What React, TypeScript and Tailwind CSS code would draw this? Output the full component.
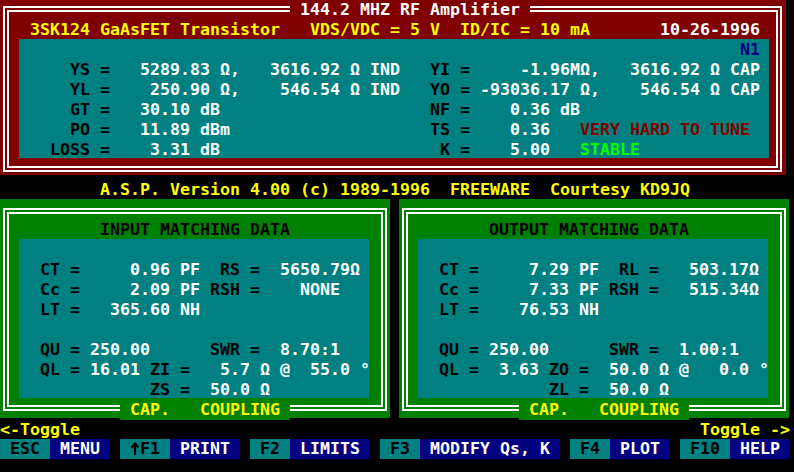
import React from 'react';

// [column, text, colour class]
type Seg = [number, string, string];

const W = 'text-white';
const K = 'text-black';
const Y = 'text-[#ffff00]';

// one 20px text row; `from` is the screen column at the row's left edge
const Line: React.FC<{ from: number; segs?: Seg[] }> = ({ from, segs = [] }) => {
  let pos = from;
  return (
    <div className="h-5 leading-5 whitespace-pre">
      {segs.map(([col, text, color], i) => {
        const pad = ' '.repeat(Math.max(0, col - pos));
        pos = col + [...text].length;
        return (
          <span key={i} className={color}>
            {pad + text}
          </span>
        );
      })}
    </div>
  );
};

const topRows: Seg[][] = [
  [[74, 'N1', 'text-[#000080]']],
  [[7, 'YS =', K], [14, '5289.83 Ω,', W], [27, '3616.92 Ω IND', W], [43, 'YI =', K], [52, '-1.96MΩ,', W], [63, '3616.92 Ω CAP', W]],
  [[7, 'YL =', K], [15, '250.90 Ω,', W], [28, '546.54 Ω IND', W], [43, 'YO =', K], [48, '-93036.17 Ω,', W], [64, '546.54 Ω CAP', W]],
  [[7, 'GT =', K], [14, '30.10 dB', W], [43, 'NF =', K], [51, '0.36 dB', W]],
  [[7, 'PO =', K], [14, '11.89 dBm', W], [43, 'TS =', K], [51, '0.36', W], [58, 'VERY HARD TO TUNE', 'text-[#800000]']],
  [[5, 'LOSS =', K], [15, '3.31 dB', W], [44, 'K =', K], [51, '5.00', W], [58, 'STABLE', 'text-[#00ff00]']],
];

const inputRows: Seg[][] = [
  [],
  [[4, 'CT =', K], [13, '0.96 PF', W], [22, 'RS =', K], [28, '5650.79Ω', W]],
  [[4, 'Cc =', K], [13, '2.09 PF', W], [21, 'RSH =', K], [30, 'NONE', W]],
  [[4, 'LT =', K], [11, '365.60 NH', W]],
  [],
  [[4, 'QU =', K], [9, '250.00', W], [21, 'SWR =', K], [28, '8.70:1', W]],
  [[4, 'QL =', K], [9, '16.01', W], [15, 'ZI =', K], [22, '5.7 Ω @  55.0 °', W]],
  [[15, 'ZS =', K], [21, '50.0 Ω', W]],
];

const outputRows: Seg[][] = [
  [],
  [[4, 'CT =', K], [13, '7.29 PF', W], [22, 'RL =', K], [29, '503.17Ω', W]],
  [[4, 'Cc =', K], [13, '7.33 PF', W], [21, 'RSH =', K], [29, '515.34Ω', W]],
  [[4, 'LT =', K], [12, '76.53 NH', W]],
  [],
  [[4, 'QU =', K], [9, '250.00', W], [21, 'SWR =', K], [28, '1.00:1', W]],
  [[4, 'QL =', K], [10, '3.63', W], [15, 'ZO =', K], [21, '50.0 Ω @   0.0 °', W]],
  [[15, 'ZL =', K], [21, '50.0 Ω', W]],
];

const MatchPanel: React.FC<{ title: string; titleCol: number; rows: Seg[][] }> = ({ title, titleCol, rows }) => (
  <div className="relative w-[390px] h-[219px] bg-[#008000] pt-[9px] pl-[3px]">
    <div className="w-[384px] h-[203px] border-[6px] border-double border-white">
      <div className="h-[25px] pt-[6px] pl-px">
        <Line from={1} segs={[[titleCol, title, K]]} />
      </div>
      <div className="ml-[10px] w-[350px] h-[159px] bg-[#008080] pt-px pl-px">
        {rows.map((r, i) => (
          <Line key={i} from={2} segs={r} />
        ))}
      </div>
    </div>
    <div className={`absolute left-[120px] top-[201px] h-5 leading-5 whitespace-pre bg-[#008000] ${Y}`}>
      {' CAP.   COUPLING '}
    </div>
  </div>
);

// the shift-arrow of the old PC keyboard, one character cell wide
const UpArrow = () => (
  <svg width="10" height="20" viewBox="0 0 10 20" className="inline-block align-top">
    <path d="M5 4v12" stroke="currentColor" strokeWidth="2.2" />
    <path d="M1.5 8.5L5 4.5l3.5 4" stroke="currentColor" strokeWidth="2" fill="none" />
  </svg>
);

const menu: [React.ReactNode, string][] = [
  ['ESC', 'MENU'],
  [<><UpArrow />F1</>, 'PRINT'],
  ['F2', 'LIMITS'],
  ['F3', 'MODIFY Qs, K'],
  ['F4', 'PLOT'],
  ['F10', 'HELP'],
];

export default function App() {
  return (
    <div className="w-[794px] h-[472px] overflow-hidden bg-black font-['DejaVu_Sans_Mono','Liberation_Mono',monospace] text-[16.61px] font-bold">
      {/* amplifier summary */}
      <div className="relative w-[786px] h-[175px] bg-[#800000] pt-[6px] pl-[3px]">
        <div className="w-[779px] h-[166px] border-[6px] border-double border-white">
          <div className="h-[27px] pt-[8px] pl-px">
            <Line
              from={1}
              segs={[
                [3, '3SK124 GaAsFET Transistor', Y],
                [31, 'VDS/VDC = 5 V', Y],
                [46, 'ID/IC = 10 mA', Y],
                [66, '10-26-1996', W],
              ]}
            />
          </div>
          <div className="ml-[10px] w-[750px] h-[119px] bg-[#008080] pt-px pl-px">
            {topRows.map((r, i) => (
              <Line key={i} from={2} segs={r} />
            ))}
          </div>
        </div>
        <div className="absolute left-[290px] top-0 h-5 leading-5 whitespace-pre bg-[#800000] text-white">
          {' 144.2 MHZ RF Amplifier '}
        </div>
      </div>

      <div className="h-[24px] pt-[5px]">
        <Line from={0} segs={[[10, 'A.S.P. Version 4.00 (c) 1989-1996  FREEWARE  Courtesy KD9JQ', Y]]} />
      </div>

      <div className="flex gap-[9px] h-[219px]">
        <MatchPanel title="INPUT MATCHING DATA" titleCol={10} rows={inputRows} />
        <MatchPanel title="OUTPUT MATCHING DATA" titleCol={9} rows={outputRows} />
      </div>

      <div className="h-[21px] pt-[2px]">
        <Line from={0} segs={[[0, '<-Toggle', Y], [70, 'Toggle ->', Y]]} />
      </div>

      <div className="flex gap-[10px] h-5 leading-5">
        {menu.map(([key, label]) => (
          <div key={label} className="flex whitespace-pre">
            <span className="bg-[#008080] text-black px-[10px]">{key}</span>
            <span className="bg-[#000080] text-white px-[10px]">{label}</span>
          </div>
        ))}
      </div>
    </div>
  );
}
